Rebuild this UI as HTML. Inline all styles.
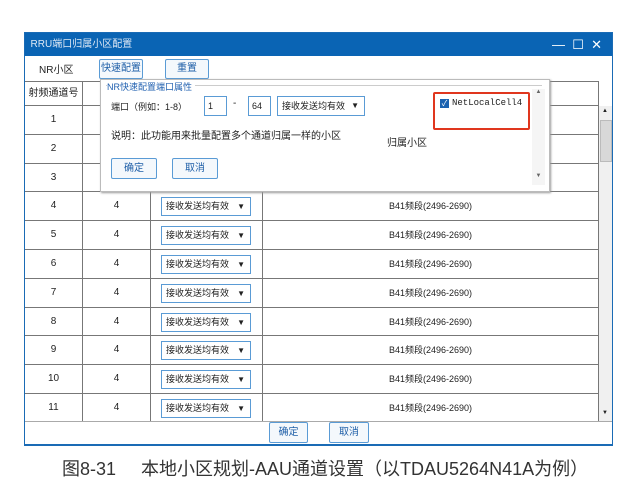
<!DOCTYPE html><html><head><meta charset="utf-8"><style>
body{margin:0;width:639px;height:485px;background:#fff;position:relative;overflow:hidden;font-family:"Liberation Sans","Noto Sans CJK SC",sans-serif;font-size:10px;color:#222}
.a{position:absolute}
.win{left:24px;top:32px;width:587px;height:412px;border:1px solid #1a6bb5;background:#fff}
.title{left:0;top:0;width:587px;height:23px;background:#0a64b4;color:#dfe9f5;font-size:10px;line-height:23px}
.btn{position:absolute;border:1px solid #5a9bd5;background:#f4f8fc;color:#1f5fa8;text-align:center;font-size:10px;border-radius:2px}
.cell{position:absolute;border-right:1px solid #777;border-bottom:1px solid #777;text-align:center;box-sizing:border-box}
.sel{position:absolute;border:1px solid #5a9bd5;background:#fff;font-size:9px;box-sizing:border-box;padding-left:4px}
.sel:after{content:"▼";position:absolute;right:5px;font-size:8px}
</style></head><body>
<div class="a win">
<div class="a title">&nbsp;&nbsp;RRU端口归属小区配置<span style="position:absolute;right:10px;font-size:13px;color:#fff">—&nbsp;&nbsp;☐&nbsp;&nbsp;✕</span></div>
<div class="a" style="left:14px;top:28px">NR小区</div>
<div class="btn" style="left:74px;top:26px;width:42px;height:18px;line-height:18px">快速配置</div>
<div class="btn" style="left:140px;top:26px;width:42px;height:18px;line-height:18px">重置</div>
<div class="a" style="left:0;top:48px;width:574px;height:340px;border-top:1px solid #777">
<div class="cell" style="left:0;top:0;width:58px;height:24px;line-height:24px">射频通道号</div>
<div class="cell" style="left:58px;top:0;width:68px;height:24px"></div>
<div class="cell" style="left:126px;top:0;width:112px;height:24px"></div>
<div class="cell" style="left:238px;top:0;width:336px;height:24px"></div>
<div id="rows"></div>
</div>
<div class="a" style="left:574px;top:73px;width:13px;height:315px;background:#f0f0f0"><div class="a" style="left:1px;top:14px;width:10px;height:40px;background:#d8d8d8;border:1px solid #bbb"></div><div class="a" style="left:3px;top:2px;font-size:6px">▲</div><div class="a" style="left:3px;top:304px;font-size:6px">▼</div></div>
<div class="a" style="left:0;top:388px;width:587px;height:23px;border-top:1px solid #aaa;background:#fff"></div>
<div class="btn" style="left:244px;top:389px;width:37px;height:19px;line-height:19px">确定</div>
<div class="btn" style="left:304px;top:389px;width:38px;height:19px;line-height:19px">取消</div>
</div>
<div class="a" style="left:24px;top:444px;width:589px;height:1px;background:#1a6bb5"></div>
<div class="a" style="left:100px;top:79px;width:448px;height:111px;background:#fff;border:1px solid #bbb;box-shadow:1px 1px 2px #999">
<div class="a" style="left:5px;top:5px;width:436px;border-top:1px solid #ccc"></div>
<div class="a" style="left:6px;top:0px;color:#2060b0;background:#fff;font-size:9px;padding-right:3px">NR快速配置端口属性</div>
<div class="a" style="left:10px;top:20px;font-size:9px">端口（例如：1-8）</div>
<div class="a" style="left:103px;top:16px;width:18px;height:18px;border:1px solid #5a9bd5;font-size:9px;line-height:18px;padding-left:3px">1</div>
<div class="a" style="left:132px;top:18px">-</div>
<div class="a" style="left:147px;top:16px;width:18px;height:18px;border:1px solid #5a9bd5;font-size:9px;line-height:18px;padding-left:3px">64</div>
<div class="sel" style="left:176px;top:16px;width:88px;height:20px;line-height:18px">接收发送均有效</div>
<div class="a" style="left:10px;top:47px">说明：此功能用来批量配置多个通道归属一样的小区</div>
<div class="a" style="left:286px;top:54px">归属小区</div>
<div class="btn" style="left:10px;top:78px;width:44px;height:19px;line-height:19px">确定</div>
<div class="btn" style="left:71px;top:78px;width:44px;height:19px;line-height:19px">取消</div>
<div class="a" style="left:332px;top:12px;width:93px;height:34px;border:2px solid #e0361e;border-radius:2px"></div>
<div class="a" style="left:339px;top:19px;width:9px;height:9px;background:#1a62b0;color:#fff;font-size:8px;line-height:9px;text-align:center">✓</div>
<div class="a" style="left:351px;top:18px;font-family:'Liberation Mono',monospace;font-size:9px">NetLocalCell4</div>
<div class="a" style="left:431px;top:9px;width:13px;height:96px;background:#f5f5f5;font-size:6px;text-align:center;color:#666">▲<div style="margin-top:78px">▼</div></div>
</div>
<div class="a" style="left:62px;top:455px;font-size:18px;color:#333;white-space:nowrap">图8-31&nbsp;&nbsp;&nbsp;&nbsp;&nbsp;本地小区规划-AAU通道设置（以TDAU5264N41A为例）</div>
<script>
var h='';for(var i=1;i<=11;i++){var t=24+(i-1)*28.8;var s='top:'+t+'px;height:28.8px;line-height:28px;';
h+='<div class="cell" style="left:0;width:58px;'+s+'">'+i+'</div>';
h+='<div class="cell" style="left:58px;width:68px;'+s+'">'+(i>3?'4':'')+'</div>';
h+='<div class="cell" style="left:126px;width:112px;'+s+'">'+(i>3?'<div class="sel" style="left:10px;top:5px;width:90px;height:19px;line-height:17px;text-align:left">接收发送均有效</div>':'')+'</div>';
h+='<div class="cell" style="left:238px;width:336px;'+s+'font-size:9px">'+(i>3?'B41频段(2496-2690)':'')+'</div>';}
document.getElementById('rows').innerHTML=h;
</script>
</body></html>
